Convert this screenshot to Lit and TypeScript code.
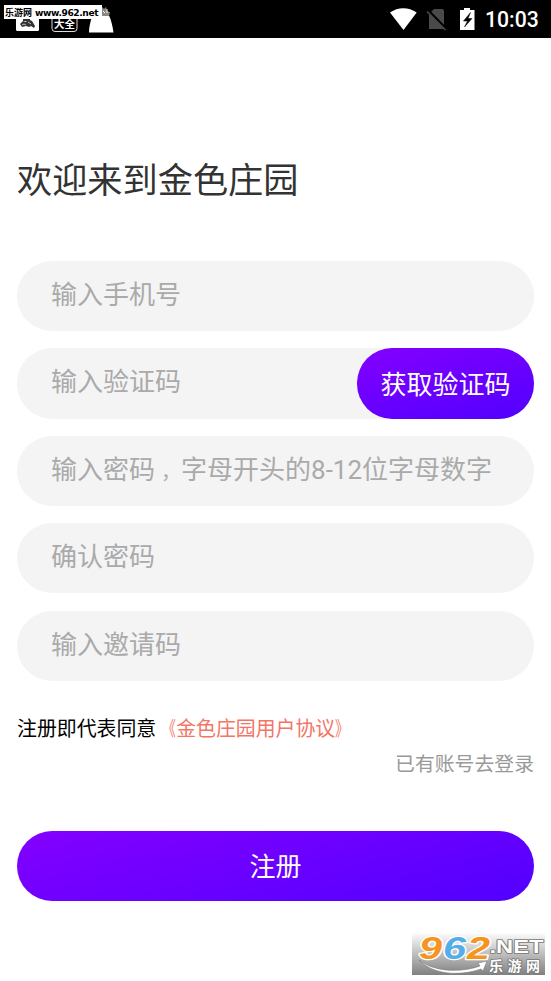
import { LitElement, html, css, svg } from "lit";
import { customElement, property } from "lit/decorators.js";

const base = css`
  * { box-sizing: border-box; }
  svg { display: block; overflow: visible; }
`;

@customElement("status-bar")
class StatusBar extends LitElement {
  static styles = [base, css`
    :host { display: flex; height: 38px; background: #000; justify-content: space-between; position: relative; color: #fff; }
    .left { display: flex; }
    .right { display: flex; }
    .clock { font: 500 21.2px/38px Roboto, sans-serif; width: 54px; margin-right: 12px; white-space: nowrap; padding-top: 1px; }
    .tag { position: absolute; left: 4px; top: 5px; width: 98px; height: 14px; background: #fff; color: #000; display: flex; align-items: center; white-space: nowrap; gap: 3px; padding-left: 1px; }
    .cn { font: 700 9px/14px "Noto Sans CJK SC", sans-serif; padding-top: 1px; }
    .url { font: 700 9.1px/14px "DejaVu Sans", sans-serif; letter-spacing: -0.4px; padding-top: 1px; }
    .app { font: 700 10.5px "Noto Sans CJK SC", sans-serif; }
  `];
  render() {
    return html`
      <div class="left">
        <svg width="120" height="38" viewBox="0 0 120 38">
          <rect x="16" y="10" width="23" height="21" rx="1.5" fill="#fff"/>
          <path d="M20 24l3-3 3 1 2-3 4 2 3 5-1 2-3-2-2 1-3-1-4 1zM23 19h7v2h-7z" fill="#333"/>
          <path d="M22 25l2-1 2 1m2-3l3 2" stroke="#bbb" fill="none"/>
          <rect x="52" y="10" width="25" height="21.500" rx="3" fill="#000" stroke="#ddd"/>
          <text class="app" x="54" y="28" fill="#fff">大全</text>
          <path d="M89 32.500c0-6 1.500-11 3-16l9-1.500 8 .5c2 4 3.500 10 4.500 17z" fill="#fff"/>
          <path d="M102 7l2 2 2-2 1 4 3 1-1 4h-7z" fill="#888"/>
          <path d="M103 11l2 2m2-4v4" stroke="#fff"/>
        </svg>
      </div>
      <div class="right">
        <svg width="100" height="38" viewBox="384 0 100 38">
          <path d="M389 12.600C397 6.700 407.500 6.700 415.700 12.600L402.500 30z" fill="#fff"/>
          <path d="M433 9h8q2 0 2 2v18h-15V14z" fill="#4a4a4a"/>
          <path d="M427 10.500L445 29" stroke="#000" stroke-width="3"/>
          <path d="M426 11.500L444.500 30" stroke="#4a4a4a" stroke-width="1.600"/>
          <path d="M463 8h6v2h4.500v20H459V10h4z" fill="#fff"/>
          <path d="M469.500 12.500l-7 8.500h4L463.500 27l7.500-8.500h-4z" fill="#000" stroke="#000" stroke-width=".5"/>
        </svg>
        <div class="clock">10:03</div>
      </div>
      <div class="tag"><span class="cn">乐游网</span><span class="url">www.962.net</span></div>
    `;
  }
}

@customElement("form-field")
class FormField extends LitElement {
  @property() label = "";
  static styles = [base, css`
    :host { display: flex; height: 70.2px; border-radius: 35.1px; background: #f4f4f4; justify-content: space-between; }
    .hint { padding-left: 34px; font: 400 26px/69px Roboto, "Noto Sans CJK SC", sans-serif; color: #aaa; white-space: nowrap; }
    .comma { display: inline-block; width: 26px; padding-left: 6px; font-size: 20px; line-height: 30px; }
  `];
  render() {
    return html`<div class="hint">${this.label.split("，").map((t, i) => i ? html`<span class="comma">，</span>${t}` : t)}</div><slot></slot>`;
  }
}

@customElement("site-mark")
class SiteMark extends LitElement {
  static styles = [base, css`
    :host { display: block; position: absolute; left: 412px; top: 933px; width: 133px; height: 42px; background: linear-gradient(#fcfcfc, #808080); }
    .num { font: italic 700 32px "Liberation Sans", sans-serif; stroke-width: 2.6px; }
    .net { font: 700 18px "Liberation Sans", sans-serif; }
    .cn { font: 700 14px "Noto Sans CJK SC", sans-serif; }
    text { paint-order: stroke; stroke-linejoin: round; }
  `];
  render() {
    const digits = [["9", 7, "#f59420"], ["6", 31, "#55aee8"], ["2", 55, "#f59420"]];
    return html`<svg width="133" height="42" viewBox="0 0 133 42">
      ${digits.map(([d, x, c]) => svg`<text class="num" x=${x} y="25.500" textLength="23" lengthAdjust="spacingAndGlyphs" fill=${c} stroke="#fff">${d}</text>`)}
      <path d="M7 27C22 39 48 40 68 33L66 30 75 28 71 38 69 36C46 44 20 41 7 27z" fill="#fff" stroke="#777" stroke-width=".6"/>
      <text class="net" x="77.500" y="19.500" textLength="54" lengthAdjust="spacingAndGlyphs" fill="#fff" stroke="#777" stroke-width="1.600">.NET</text>
      <text class="cn" x="77" y="37.500" textLength="51" fill="#fff" stroke="#777" stroke-width="1.600">乐游网</text>
    </svg>`;
  }
}

@customElement("app-root")
class AppRoot extends LitElement {
  static styles = [base, css`
    :host { display: block; position: relative; width: 551px; height: 981px; overflow: hidden; background: #fff; font-family: Roboto, "Noto Sans CJK SC", sans-serif; }
    main { padding: 0 17px; }
    h1 { margin: 118px 0 0; font-size: 35.2px; line-height: 50px; font-weight: 400; color: #333; white-space: nowrap; }
    .fields { display: grid; gap: 17.2px; margin-top: 55px; }
    .btn { display: flex; align-items: center; justify-content: center; height: 70.2px; padding-bottom: 2px; border-radius: 35.1px; color: #fff; font-size: 26px; background: linear-gradient(165deg, #8400ff, #5100ff); white-space: nowrap; }
    .code { width: 177px; }
    .terms { margin-top: 34.600px; font-size: 19.9px; line-height: 30px; color: #000; white-space: nowrap; }
    .link { color: #f37565; }
    .open, .close { display: inline-block; transform: scaleX(0.7); }
    .open { transform-origin: right; }
    .close { transform-origin: left; }
    .login { margin-top: 4.5px; font-size: 19.85px; line-height: 30px; color: #999; text-align: right; }
    .submit { margin-top: 51px; }
  `];
  render() {
    return html`
      <status-bar></status-bar>
      <main>
        <h1>欢迎来到金色庄园</h1>
        <div class="fields">
          <form-field label="输入手机号"></form-field>
          <form-field label="输入验证码"><div class="btn code">获取验证码</div></form-field>
          <form-field label="输入密码，字母开头的8-12位字母数字"></form-field>
          <form-field label="确认密码"></form-field>
          <form-field label="输入邀请码"></form-field>
        </div>
        <div class="terms">注册即代表同意<span class="link"><span class="open">《</span>金色庄园用户协议<span class="close">》</span></span></div>
        <div class="login">已有账号去登录</div>
        <div class="btn submit">注册</div>
      </main>
      <site-mark></site-mark>
    `;
  }
}
